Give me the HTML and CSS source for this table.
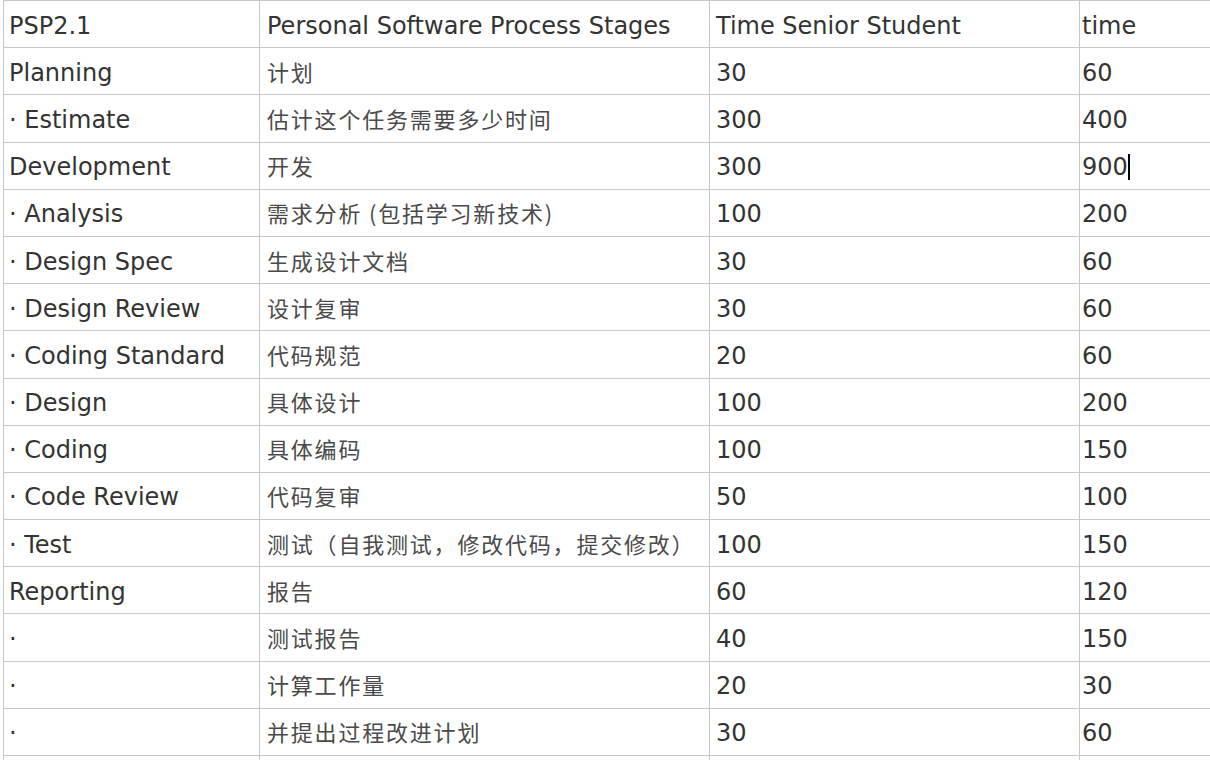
FILE: index.html
```html
<!DOCTYPE html>
<html>
<head>
<title>PSP</title>
<link rel="stylesheet" href="styles.css">
</head>
<body>
<table class="psp">
<colgroup>
<col class="c1"><col class="c2"><col class="c3"><col class="c4">
</colgroup>
<tr><td>PSP2.1</td><td>Personal Software Process Stages</td><td>Time Senior Student</td><td>time</td></tr>
<tr><td>Planning</td><td><span class="zh">计划</span></td><td>30</td><td>60</td></tr>
<tr><td>· Estimate</td><td><span class="zh">估计这个任务需要多少时间</span></td><td>300</td><td>400</td></tr>
<tr><td>Development</td><td><span class="zh">开发</span></td><td>300</td><td>900<span class="caret"></span></td></tr>
<tr><td>· Analysis</td><td><span class="zh">需求分析 (包括学习新技术)</span></td><td>100</td><td>200</td></tr>
<tr><td>· Design Spec</td><td><span class="zh">生成设计文档</span></td><td>30</td><td>60</td></tr>
<tr><td>· Design Review</td><td><span class="zh">设计复审</span></td><td>30</td><td>60</td></tr>
<tr><td>· Coding Standard</td><td><span class="zh">代码规范</span></td><td>20</td><td>60</td></tr>
<tr><td>· Design</td><td><span class="zh">具体设计</span></td><td>100</td><td>200</td></tr>
<tr><td>· Coding</td><td><span class="zh">具体编码</span></td><td>100</td><td>150</td></tr>
<tr><td>· Code Review</td><td><span class="zh">代码复审</span></td><td>50</td><td>100</td></tr>
<tr><td>· Test</td><td><span class="zh">测试（自我测试，修改代码，提交修改）</span></td><td>100</td><td>150</td></tr>
<tr><td>Reporting</td><td><span class="zh">报告</span></td><td>60</td><td>120</td></tr>
<tr><td>·</td><td><span class="zh">测试报告</span></td><td>40</td><td>150</td></tr>
<tr><td>·</td><td><span class="zh">计算工作量</span></td><td>20</td><td>30</td></tr>
<tr><td>·</td><td><span class="zh">并提出过程改进计划</span></td><td>30</td><td>60</td></tr>
<tr><td>&nbsp;</td><td></td><td></td><td></td></tr>
</table>
</body>
</html>
```
FILE: styles.css
```css
body {
  margin: 0;
  overflow: hidden;
  background: #fff;
  font-family: "DejaVu Sans", Verdana, sans-serif;
}
.psp {
  border-collapse: collapse;
  table-layout: fixed;
  width: 1300px;
  margin-left: 3px;
  color: #333;
  font-size: 24px;
}
.psp .c1 { width: 256px; }
.psp .c2 { width: 450px; }
.psp .c3 { width: 370px; }
.psp .c4 { width: 224px; }
.psp tr {
  height: 47.19px;
}
.psp td {
  border: 1px solid #c8c8c8;
  padding: 3px 6px 0;
  white-space: nowrap;
  vertical-align: middle;
  line-height: 26px;
}
.psp td:first-child {
  padding-left: 5px;
}
.psp td:nth-child(2) {
  padding-left: 7px;
}
.psp td:nth-child(4) {
  padding-left: 2px;
}
.zh {
  font-family: "Noto Sans CJK SC", sans-serif;
  font-size: 22px;
  color: #4a4a4a;
  letter-spacing: 1.8px;
  vertical-align: 2px;
}
.caret {
  display: inline-block;
  width: 2px;
  height: 26px;
  background: #000;
  vertical-align: -5px;
}
```
